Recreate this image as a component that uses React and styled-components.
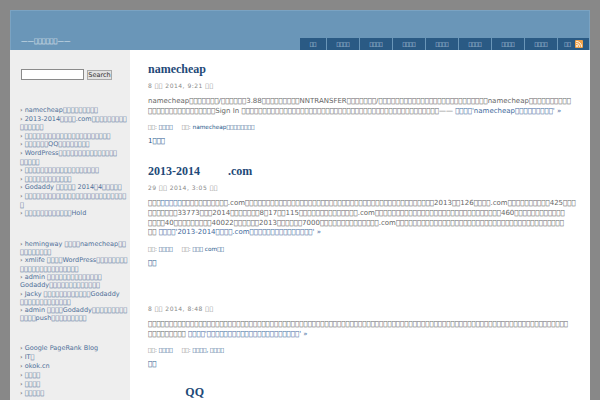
import React from "react";
import styled, { createGlobalStyle } from "styled-components";

// placeholder for the characters the page shows as empty boxes
const t = (n) => "\uE000".repeat(n);

const navItems = [2, 4, 4, 4, 4, 4, 4, 4];

const recentPosts = [
  ["namecheap" + t(9)],
  ["2013-2014" + t(4) + ".com" + t(9), t(6)],
  [t(22)],
  [t(6) + "QQ" + t(8)],
  ["WordPress" + t(15), t(5)],
  [t(19)],
  [t(12)],
  ["Godaddy " + t(5) + " 2014" + t(1) + "4" + t(5)],
  [t(26), t(1)],
  [t(12) + "Hold"],
];

const recentComments = [
  ["hemingway " + t(4) + "namecheap" + t(2), t(8)],
  ["xmlife " + t(4) + "WordPress" + t(8), t(15)],
  ["admin " + t(14), "Godaddy" + t(13)],
  ["Jacky " + t(12) + "Godaddy", t(13)],
  ["admin " + t(4) + "Godaddy" + t(9), t(4) + "push" + t(9)],
];

const blogLinks = ["Google PageRank Blog", "IT" + t(1), "okok.cn", t(4), t(4), t(5)];

const GlobalStyle = createGlobalStyle`
  html, body {
    margin: 0;
    height: 400px;
    overflow: hidden;
    background: #888;
  }
  body {
    font-family: "DejaVu Sans", sans-serif;
  }
`;

const Page = styled.div`
  margin: 10px 10px 0;
  width: 580px;
`;

const Header = styled.header`
  display: flex;
  justify-content: space-between;
  align-items: flex-end;
  height: 40px;
  background: #6a96b8;
  box-sizing: border-box;
  border: 1px solid #7ba3c2;
  border-bottom: 0;
`;

const SiteTitle = styled.div`
  color: #e6eef4;
  font-size: 6.5px;
  line-height: 9px;
  padding: 0 0 4px 10px;
`;

const Nav = styled.nav`
  display: flex;
  align-items: stretch;
  height: 12px;
  gap: 1px;
`;

const NavTab = styled.a`
  display: flex;
  align-items: center;
  justify-content: center;
  gap: 4px;
  width: ${(p) => p.$width}px;
  background: #2a5a84;
  color: #c9d9e6;
  font-size: 5.5px;
`;

const Rss = styled.svg`
  width: 8px;
  height: 8px;
  display: block;
`;

const Columns = styled.div`
  display: grid;
  grid-template-columns: 120px 460px;
  height: 350px;
  overflow: hidden;
`;

const Sidebar = styled.aside`
  background: #eee;
  padding: 19px 10px 0 11px;
  box-sizing: border-box;
  font-size: 6.5px;
  line-height: 8.6px;
  color: #4f7099;
`;

const SearchForm = styled.div`
  display: flex;
  align-items: center;
  gap: 3px;
  margin-bottom: 26px;
`;

const SearchInput = styled.div`
  width: 63px;
  height: 11px;
  box-sizing: border-box;
  background: #fff;
  border: 1px solid #8a8a8a;
`;

const SearchButton = styled.div`
  width: 25px;
  height: 10px;
  box-sizing: border-box;
  background: #e2e2e2;
  border: 1px solid #aaa;
  color: #333;
  font-size: 6.5px;
  line-height: 8px;
  text-align: center;
`;

const SideList = styled.ul`
  list-style: none;
  margin: 0 0 ${(p) => p.$gap}px -1px;
  padding: 0;
  line-height: ${(p) => p.$line}px;
  white-space: nowrap;

  li::before {
    content: "› ";
    color: #555;
  }
`;

const Main = styled.main`
  background: #fff;
  padding: 12px 0 0 18px;
  box-sizing: border-box;
  color: #666;
`;

const Post = styled.article`
  margin-bottom: ${(p) => p.$gap}px;
`;

const Title = styled.h2`
  margin: 0;
  height: 14px;
  font: bold 12px/14px "Liberation Serif", serif;
  color: #1f4a78;
`;

const PostDate = styled.div`
  margin-top: 6px;
  font-size: 6px;
  line-height: 8px;
  letter-spacing: 0.5px;
  color: #888;
`;

const Body = styled.p`
  margin: 7px 0 0;
  font-size: 7px;
  line-height: 9.8px;
  white-space: nowrap;
  color: #666;

  a {
    color: #3f6a9c;
  }
`;

const Meta = styled.div`
  margin-top: 6.5px;
  display: flex;
  gap: 9px;
  font-size: 5.8px;
  line-height: 8px;
  color: #888;

  a {
    color: #2a5a8c;
  }
`;

const Comments = styled.a`
  display: block;
  margin-top: 6px;
  font-size: 7px;
  line-height: 8px;
  color: #2a5a8c;
`;

const SideItems = ({ items, line, gap }) => (
  <SideList $line={line} $gap={gap}>
    {items.map((lines, i) => (
      <li key={i}>
        {lines.map((text, j) => (
          <React.Fragment key={j}>
            {j > 0 && <br />}
            {text}
          </React.Fragment>
        ))}
      </li>
    ))}
  </SideList>
);

export default function App() {
  return (
    <>
      <GlobalStyle />
      <Page>
        <Header>
          <SiteTitle>——{t(6)}——</SiteTitle>
          <Nav>
            {navItems.map((n, i) => (
              <NavTab key={i} $width={i === 0 ? 26 : 32}>
                {t(n)}
              </NavTab>
            ))}
            <NavTab $width={31}>
              {t(2)}
              <Rss viewBox="0 0 8 8">
                <rect width="8" height="8" rx="1" fill="#f0a24a" />
                <circle cx="2" cy="6" r="0.9" fill="#fff" />
                <path d="M1.2 3.4a3.4 3.4 0 0 1 3.4 3.4M1.2 1.4a5.4 5.4 0 0 1 5.4 5.4" fill="none" stroke="#fff" strokeWidth="0.9" />
              </Rss>
            </NavTab>
          </Nav>
        </Header>
        <Columns>
          <Sidebar>
            <SearchForm>
              <SearchInput />
              <SearchButton>Search</SearchButton>
            </SearchForm>
            <SideItems items={recentPosts} line={8.6} gap={22} />
            <SideItems items={recentComments} line={8.3} gap={21} />
            <SideItems items={blogLinks.map((b) => [b])} line={9.1} gap={0} />
          </Sidebar>
          <Main>
            <Post $gap={19}>
              <Title>namecheap</Title>
              <PostDate>8 {t(2)} 2014, 9:21 {t(2)}</PostDate>
              <Body>
                namecheap{t(7)}/{t(6)}3.88{t(9)}NNTRANSFER{t(7)}/{t(26)}namecheap{t(10)}
                <br />
                {t(16)}Sign In {t(47)}—— <a>{t(4)}'namecheap{t(9)}' »</a>
              </Body>
              <Meta>
                <span>{t(2)}: <a>{t(4)}</a></span>
                <span>{t(2)}: <a>namecheap{t(8)}</a></span>
              </Meta>
              <Comments>1{t(3)}</Comments>
            </Post>
            <Post $gap={18}>
              <Title>2013-2014{t(3)}.com</Title>
              <PostDate>29 {t(2)} 2014, 3:05 {t(2)}</PostDate>
              <Body>
                {t(3)}<a>{t(5)}</a>{t(11)}.com{t(45)}2013{t(2)}126{t(4)}.com{t(10)}425{t(3)}
                <br />
                {t(7)}33773{t(3)}2014{t(7)}8{t(1)}17{t(2)}115{t(14)}.com{t(30)}460{t(12)}
                <br />
                {t(4)}40{t(9)}40022{t(6)}2013{t(6)}7000{t(14)}.com{t(40)}
                <br />
                {t(2)} <a>{t(4)}'2013-2014{t(4)}.com{t(15)}' »</a>
              </Body>
              <Meta>
                <span>{t(2)}: <a>{t(4)}</a></span>
                <span>{t(2)}: <a>{t(3)} com{t(2)}</a></span>
              </Meta>
              <Comments>{t(2)}</Comments>
            </Post>
            <Post $gap={17}>
              <Title>{t(8)}</Title>
              <PostDate>8 {t(2)} 2014, 8:48 {t(2)}</PostDate>
              <Body>
                {t(100)}
                <br />
                {t(9)} <a>{t(4)}'{t(22)}' »</a>
              </Body>
              <Meta>
                <span>{t(2)}: <a>{t(4)}</a></span>
                <span>{t(2)}: <a>{t(4)}, {t(4)}</a></span>
              </Meta>
              <Comments>{t(2)}</Comments>
            </Post>
            <Post $gap={0}>
              <Title>{t(4)}QQ{t(8)}</Title>
            </Post>
          </Main>
        </Columns>
      </Page>
    </>
  );
}
